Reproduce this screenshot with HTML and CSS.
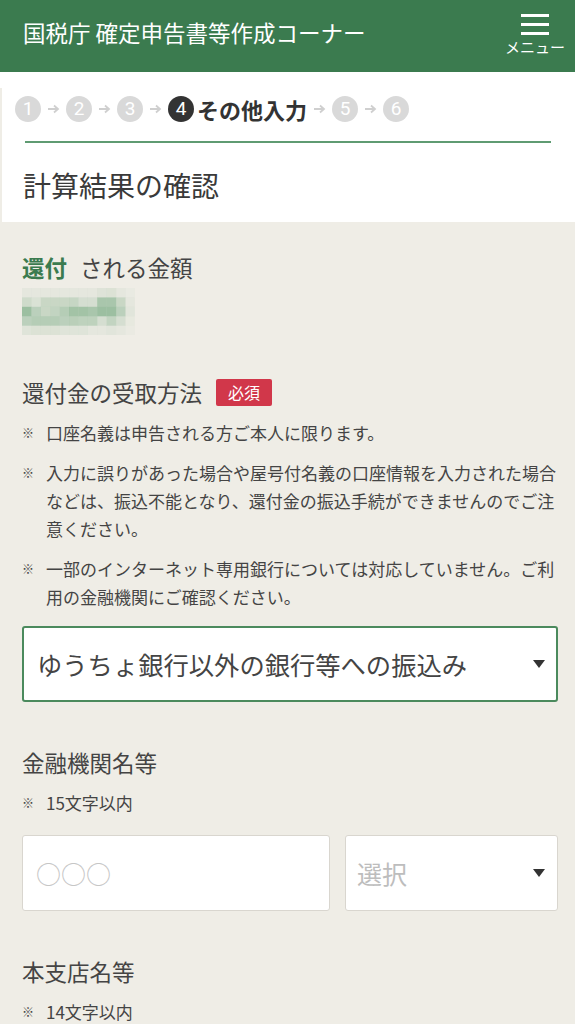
FILE: index.html
```html
<!DOCTYPE html>
<html lang="ja">
<head>
  <meta charset="UTF-8">
  <meta name="viewport" content="width=device-width, initial-scale=1.0">
  <title>確定申告書等作成コーナー</title>
  <link rel="stylesheet" href="styles.css">
</head>
<body>
  <!-- Top bar -->
  <header class="site-header">
    <h1 class="site-title">国税庁 確定申告書等作成コーナー</h1>
    <div class="menu-btn">
      <svg width="28" height="21" viewBox="0 0 28 21">
        <rect x="0" y="0" width="28" height="3" fill="#fff"/>
        <rect x="0" y="9" width="28" height="3" fill="#fff"/>
        <rect x="0" y="18" width="28" height="3" fill="#fff"/>
      </svg>
      <span class="menu-label">メニュー</span>
    </div>
  </header>

  <!-- Progress steps + page title -->
  <div class="step-wrap">
    <div class="step-panel">
      <div class="steps">
        <span class="step-num">1</span>
        <span class="step-arrow"><svg width="13" height="10" viewBox="0 0 13 10"><path d="M1 5H11M7 1.5L11 5L7 8.5" fill="none" stroke="#cfcfcf" stroke-width="1.8"/></svg></span>
        <span class="step-num">2</span>
        <span class="step-arrow"><svg width="13" height="10" viewBox="0 0 13 10"><path d="M1 5H11M7 1.5L11 5L7 8.5" fill="none" stroke="#cfcfcf" stroke-width="1.8"/></svg></span>
        <span class="step-num">3</span>
        <span class="step-arrow"><svg width="13" height="10" viewBox="0 0 13 10"><path d="M1 5H11M7 1.5L11 5L7 8.5" fill="none" stroke="#cfcfcf" stroke-width="1.8"/></svg></span>
        <span class="step-num current">4</span>
        <span class="step-current-label">その他入力</span>
        <span class="step-arrow"><svg width="13" height="10" viewBox="0 0 13 10"><path d="M1 5H11M7 1.5L11 5L7 8.5" fill="none" stroke="#cfcfcf" stroke-width="1.8"/></svg></span>
        <span class="step-num">5</span>
        <span class="step-arrow"><svg width="13" height="10" viewBox="0 0 13 10"><path d="M1 5H11M7 1.5L11 5L7 8.5" fill="none" stroke="#cfcfcf" stroke-width="1.8"/></svg></span>
        <span class="step-num">6</span>
      </div>
      <div class="step-rule"></div>
      <h2 class="page-title">計算結果の確認</h2>
    </div>
  </div>

  <main class="content">
    <p class="amount-label"><strong>還付</strong>される金額</p>
    <!-- amount is masked (pixelated) -->
    <svg class="amount-value" width="113" height="47" viewBox="0 0 113 47">
      <g class="px">
        <rect x="0" y="0" width="9.5" height="9.5" fill-opacity=".08"/><rect x="9.4" y="0" width="9.5" height="9.5" fill-opacity=".08"/><rect x="18.8" y="0" width="9.5" height="9.5" fill-opacity=".08"/><rect x="28.2" y="0" width="9.5" height="9.5" fill-opacity=".08"/><rect x="37.6" y="0" width="9.5" height="9.5" fill-opacity=".08"/><rect x="47" y="0" width="9.5" height="9.5" fill-opacity=".08"/><rect x="56.4" y="0" width="9.5" height="9.5" fill-opacity=".08"/><rect x="65.8" y="0" width="9.5" height="9.5" fill-opacity=".08"/><rect x="75.2" y="0" width="9.5" height="9.5" fill-opacity=".13"/><rect x="84.6" y="0" width="9.5" height="9.5" fill-opacity=".15"/><rect x="94" y="0" width="9.5" height="9.5" fill-opacity=".08"/><rect x="103.4" y="0" width="9.5" height="9.5" fill-opacity=".04"/>
        <rect x="0" y="9.4" width="9.5" height="9.5" fill-opacity=".25"/><rect x="9.4" y="9.4" width="9.5" height="9.5" fill-opacity=".16"/><rect x="18.8" y="9.4" width="9.5" height="9.5" fill-opacity=".3"/><rect x="28.2" y="9.4" width="9.5" height="9.5" fill-opacity=".3"/><rect x="37.6" y="9.4" width="9.5" height="9.5" fill-opacity=".3"/><rect x="47" y="9.4" width="9.5" height="9.5" fill-opacity=".32"/><rect x="56.4" y="9.4" width="9.5" height="9.5" fill-opacity=".2"/><rect x="65.8" y="9.4" width="9.5" height="9.5" fill-opacity=".2"/><rect x="75.2" y="9.4" width="9.5" height="9.5" fill-opacity=".55"/><rect x="84.6" y="9.4" width="9.5" height="9.5" fill-opacity=".55"/><rect x="94" y="9.4" width="9.5" height="9.5" fill-opacity=".3"/><rect x="103.4" y="9.4" width="9.5" height="9.5" fill-opacity=".08"/>
        <rect x="0" y="18.8" width="9.5" height="9.5" fill-opacity=".65"/><rect x="9.4" y="18.8" width="9.5" height="9.5" fill-opacity=".4"/><rect x="18.8" y="18.8" width="9.5" height="9.5" fill-opacity=".3"/><rect x="28.2" y="18.8" width="9.5" height="9.5" fill-opacity=".35"/><rect x="37.6" y="18.8" width="9.5" height="9.5" fill-opacity=".45"/><rect x="47" y="18.8" width="9.5" height="9.5" fill-opacity=".6"/><rect x="56.4" y="18.8" width="9.5" height="9.5" fill-opacity=".6"/><rect x="65.8" y="18.8" width="9.5" height="9.5" fill-opacity=".55"/><rect x="75.2" y="18.8" width="9.5" height="9.5" fill-opacity=".65"/><rect x="84.6" y="18.8" width="9.5" height="9.5" fill-opacity=".65"/><rect x="94" y="18.8" width="9.5" height="9.5" fill-opacity=".4"/><rect x="103.4" y="18.8" width="9.5" height="9.5" fill-opacity=".1"/>
        <rect x="0" y="28.2" width="9.5" height="9.5" fill-opacity=".4"/><rect x="9.4" y="28.2" width="9.5" height="9.5" fill-opacity=".45"/><rect x="18.8" y="28.2" width="9.5" height="9.5" fill-opacity=".45"/><rect x="28.2" y="28.2" width="9.5" height="9.5" fill-opacity=".45"/><rect x="37.6" y="28.2" width="9.5" height="9.5" fill-opacity=".4"/><rect x="47" y="28.2" width="9.5" height="9.5" fill-opacity=".42"/><rect x="56.4" y="28.2" width="9.5" height="9.5" fill-opacity=".38"/><rect x="65.8" y="28.2" width="9.5" height="9.5" fill-opacity=".38"/><rect x="75.2" y="28.2" width="9.5" height="9.5" fill-opacity=".2"/><rect x="84.6" y="28.2" width="9.5" height="9.5" fill-opacity=".35"/><rect x="94" y="28.2" width="9.5" height="9.5" fill-opacity=".2"/><rect x="103.4" y="28.2" width="9.5" height="9.5" fill-opacity=".06"/>
        <rect x="0" y="37.6" width="9.5" height="9.4" fill-opacity=".12"/><rect x="9.4" y="37.6" width="9.5" height="9.4" fill-opacity=".15"/><rect x="18.8" y="37.6" width="9.5" height="9.4" fill-opacity=".15"/><rect x="28.2" y="37.6" width="9.5" height="9.4" fill-opacity=".15"/><rect x="37.6" y="37.6" width="9.5" height="9.4" fill-opacity=".12"/><rect x="47" y="37.6" width="9.5" height="9.4" fill-opacity=".12"/><rect x="56.4" y="37.6" width="9.5" height="9.4" fill-opacity=".12"/><rect x="65.8" y="37.6" width="9.5" height="9.4" fill-opacity=".08"/><rect x="75.2" y="37.6" width="9.5" height="9.4" fill-opacity=".08"/><rect x="84.6" y="37.6" width="9.5" height="9.4" fill-opacity=".1"/><rect x="94" y="37.6" width="9.5" height="9.4" fill-opacity=".08"/><rect x="103.4" y="37.6" width="9.5" height="9.4" fill-opacity=".03"/>
      </g>
    </svg>

    <!-- Refund method -->
    <div class="field-label">還付金の受取方法<span class="badge-required">必須</span></div>
    <ul class="notes">
      <li><span class="mark">※</span><span>口座名義は申告される方ご本人に限ります。</span></li>
      <li><span class="mark">※</span><span>入力に誤りがあった場合や屋号付名義の口座情報を入力された場合などは、振込不能となり、還付金の振込手続ができませんのでご注意ください。</span></li>
      <li><span class="mark">※</span><span>一部のインターネット専用銀行については対応していません。ご利用の金融機関にご確認ください。</span></li>
    </ul>
    <div class="select-box selected">
      <span>ゆうちょ銀行以外の銀行等への振込み</span>
      <span class="caret"></span>
    </div>

    <!-- Bank name -->
    <div class="field-label spaced">金融機関名等</div>
    <ul class="notes">
      <li><span class="mark">※</span><span>15文字以内</span></li>
    </ul>
    <div class="input-row">
      <input class="text-input" type="text" placeholder="○○○">
      <div class="select-box small">
        <span>選択</span>
        <span class="caret"></span>
      </div>
    </div>

    <!-- Branch name -->
    <div class="field-label spaced">本支店名等</div>
    <ul class="notes">
      <li><span class="mark">※</span><span>14文字以内</span></li>
    </ul>
  </main>
</body>
</html>
```

FILE: styles.css
```css
/* Base */
body {
  margin: 0;
  font-family: "Noto Sans CJK JP", "Noto Sans", sans-serif;
  background-color: #efede6;
  color: #444;
}

/* Header */
.site-header {
  height: 72px;
  box-sizing: border-box;
  background-color: #3b7b4f;
  color: #fff;
  display: flex;
  justify-content: space-between;
  align-items: flex-start;
  padding: 0 9px 0 23px;
}
.site-title {
  margin: 20px 0 0;
  font-size: 22.5px;
  line-height: 24px;
  font-weight: normal;
}
.menu-btn {
  width: 62px;
  display: flex;
  flex-direction: column;
  align-items: center;
  padding-top: 14px;
}
.menu-btn svg {
  display: block;
}
.menu-label {
  margin-top: 4px;
  font-size: 15px;
  line-height: 15px;
}

/* Steps */
.step-wrap {
  background: #fff;
  padding-top: 16px;
}
.step-panel {
  border-left: 2px solid #efede6;
  padding: 7px 0 19px;
}
.steps {
  display: flex;
  align-items: center;
  height: 28px;
  padding-left: 13px;
}
.step-num {
  width: 26px;
  height: 26px;
  border-radius: 50%;
  background: #d9d9d9;
  color: #fff;
  font-family: Roboto, sans-serif;
  font-size: 19px;
  line-height: 26px;
  text-align: center;
}
.step-num.current {
  background: #333;
}
.step-arrow {
  width: 25px;
  display: flex;
  justify-content: center;
}
.step-arrow svg {
  display: block;
}
.step-current-label {
  margin-left: 3px;
  font-size: 22px;
  line-height: 28px;
  font-weight: bold;
  color: #333;
}
.step-rule {
  height: 2px;
  background: #5f9b72;
  margin: 18px 24px 0 23px;
}
.page-title {
  margin: 24px 0 0 21px;
  font-size: 28px;
  line-height: 36px;
  font-weight: normal;
  color: #3a3a3a;
}

/* Content */
.content {
  padding: 30px 17px 40px 22px;
}
.amount-label {
  margin: 0;
  font-size: 22.5px;
  line-height: 30px;
}
.amount-label strong {
  color: #3b7b4f;
  margin-right: 13px;
}
.amount-value {
  display: block;
  margin-top: 6px;
}
.px {
  fill: #6fa67c;
}
.field-label {
  display: flex;
  align-items: center;
  margin-top: 42px;
  font-size: 22.5px;
  line-height: 30px;
}
.field-label.spaced {
  margin-top: 45px;
}
.badge-required {
  margin-left: 14px;
  padding: 0 12px;
  background: #d1374a;
  color: #fff;
  font-size: 16px;
  line-height: 27px;
  border-radius: 2px;
}
.notes {
  list-style: none;
  margin: 12px 0 0;
  padding: 0;
}
.notes li {
  display: flex;
  font-size: 17px;
  line-height: 28px;
}
.notes li + li {
  margin-top: 12px;
}
.notes .mark {
  flex: none;
  width: 24px;
  font-size: 12px;
  font-weight: bold;
  color: #444;
}

/* Form controls */
.select-box {
  height: 76px;
  box-sizing: border-box;
  background: #fff;
  display: flex;
  align-items: center;
  justify-content: space-between;
  font-size: 25px;
  border-radius: 3px;
}
.select-box.selected {
  margin-top: 15px;
  border: 2px solid #4b8a5d;
  padding: 0 11px 0 13px;
  font-size: 25.3px;
  color: #444;
}
.select-box.small {
  width: 213px;
  flex: none;
  border: 1px solid #d9d6cf;
  padding: 0 12px 0 11px;
  color: #bdbdbd;
}
.caret {
  width: 0;
  height: 0;
  border-left: 6.5px solid transparent;
  border-right: 6.5px solid transparent;
  border-top: 8px solid #333;
}
.input-row {
  display: flex;
  gap: 15px;
  margin-top: 18px;
}
.text-input {
  flex: 1;
  min-width: 0;
  height: 76px;
  box-sizing: border-box;
  border: 1px solid #d9d6cf;
  border-radius: 3px;
  padding: 0 13px;
  font-family: inherit;
  font-size: 25px;
  background: #fff;
}
.text-input::placeholder {
  color: #c6c6c6;
}
```
